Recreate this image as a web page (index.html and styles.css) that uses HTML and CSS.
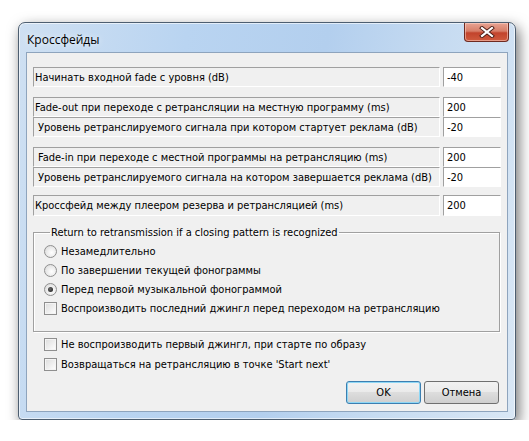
FILE: index.html
```html
<!DOCTYPE html>
<html lang="ru">
<head>
<meta charset="utf-8">
<title>Кроссфейды</title>
<link rel="stylesheet" href="styles.css">
</head>
<body>
    <div class="window">
        <div class="titleBar">
            <span class="title">Кроссфейды</span>
            <span class="closeButton">
                <svg width="16" height="12" viewBox="0 0 16 12">
                    <path d="M3 2 L13 10 M13 2 L3 10" stroke="#4a1c14" stroke-width="4" stroke-linecap="square"/>
                    <path d="M3 2 L13 10 M13 2 L3 10" stroke="#ffffff" stroke-width="2.2" stroke-linecap="square"/>
                </svg>
            </span>
        </div>
        <div class="client">
            <div class="row first">
                <span class="label">Начинать входной fade с уровня (dB)</span>
                <span class="value">-40</span>
            </div>
            <div class="row spaced">
                <span class="label">Fade-out при переходе с ретрансляции на местную программу (ms)</span>
                <span class="value">200</span>
            </div>
            <div class="row">
                <span class="label indent">Уровень ретранслируемого сигнала при котором стартует реклама (dB)</span>
                <span class="value">-20</span>
            </div>
            <div class="row spaced">
                <span class="label indent">Fade-in при переходе с местной программы на ретрансляцию (ms)</span>
                <span class="value">200</span>
            </div>
            <div class="row">
                <span class="label indent">Уровень ретранслируемого сигнала на котором завершается реклама (dB)</span>
                <span class="value">-20</span>
            </div>
            <div class="row last">
                <span class="label">Кроссфейд между плеером резерва и ретрансляцией (ms)</span>
                <span class="value">200</span>
            </div>

            <fieldset class="group">
                <legend>Return to retransmission if a closing pattern is recognized</legend>
                <div class="option"><span class="radio"></span>Незамедлительно</div>
                <div class="option"><span class="radio"></span>По завершении текущей фонограммы</div>
                <div class="option"><span class="radio checked"></span>Перед первой музыкальной фонограммой</div>
                <div class="option"><span class="check"></span>Воспроизводить последний джингл перед переходом на ретрансляцию</div>
            </fieldset>

            <div class="options">
                <div class="option"><span class="check"></span>Не воспроизводить первый джингл, при старте по образу</div>
                <div class="option"><span class="check"></span>Возвращаться на ретрансляцию в точке 'Start next'</div>
            </div>

            <div class="buttons">
                <span class="button default">OK</span>
                <span class="button">Отмена</span>
            </div>
        </div>
    </div>
</body>
</html>
```

FILE: styles.css
```css
body {
	margin: 0;
	background-color: #ffffff;
	font-family: "DejaVu Sans Condensed", "DejaVu Sans", Tahoma, sans-serif;
	font-size: 11px;
	color: #000000;
}

.window {
	box-sizing: border-box;
	width: 498px;
	height: 398px;
	margin: 22px 0 0 18px;
	border: 1px solid #4d5e70;
	border-radius: 7px 7px 4px 4px;
	background: linear-gradient(100deg, #cfe0f2 0%, #b9d4f1 30%, #b3cfee 55%, #c6dbf1 75%, #d9e7f5 100%);
	box-shadow: 3px 5px 14px rgba(0, 0, 0, 0.55), inset 0 0 0 1px rgba(255, 255, 255, 0.6);
	padding: 0 7px 7px 7px;
	display: flex;
	flex-direction: column;
}

.titleBar {
	height: 29px;
	display: flex;
	align-items: flex-start;
	justify-content: space-between;
}

.title {
	font-family: "Open Sans", "Noto Sans", sans-serif;
	font-size: 12px;
	margin: 8px 0 0 1px;
	text-shadow: 0 0 6px rgba(255, 255, 255, 0.9);
}

.closeButton {
	box-sizing: border-box;
	width: 45px;
	height: 19px;
	margin-right: -1px;
	border: 1px solid #6e2a20;
	border-top: none;
	border-radius: 0 0 4px 4px;
	background: linear-gradient(#e8a493 0%, #d77e68 45%, #c2432c 55%, #cf5b3e 100%);
	box-shadow: inset 0 0 0 1px rgba(255, 220, 210, 0.5);
	display: flex;
	align-items: center;
	justify-content: center;
}

.client {
	flex: 1;
	background-color: #f0f0f0;
	border: 1px solid #8ea4bd;
	padding: 0 6px 0 6px;
	display: flex;
	flex-direction: column;
}

.row {
	display: flex;
	height: 20px;
	gap: 3px;
}
.row.first {
	margin-top: 14px;
}
.row.spaced {
	margin-top: 10px;
}
.row.last {
	margin-top: 8px;
	height: 21px;
}

.label, .value {
	box-sizing: border-box;
	border-top: 1px solid #a0a0a0;
	border-left: 1px solid #a0a0a0;
	border-bottom: 1px solid #ffffff;
	border-right: 1px solid #ffffff;
	display: flex;
	align-items: center;
	white-space: nowrap;
	overflow: hidden;
}
.label {
	flex: 1;
	padding-left: 1px;
}
.label.indent {
	padding-left: 4px;
}
.value {
	width: 58px;
	background-color: #ffffff;
	padding-left: 3px;
}

.group {
	margin: 10px 1px 0 0;
	padding: 3px 0 13px 10px;
	border: 1px solid #a0a0a0;
	box-shadow: inset 1px 1px 0 #ffffff, 1px 1px 0 #ffffff;
}
.group legend {
	padding: 0 1px;
	margin-left: 6px;
}

.option {
	display: flex;
	align-items: center;
	height: 18px;
	gap: 4px;
	white-space: nowrap;
}
.group .option:nth-child(3) {
	height: 19px;
	margin-top: 1px;
}
.group .option:last-child {
	height: 20px;
}

.radio {
	box-sizing: border-box;
	width: 13px;
	height: 13px;
	border-radius: 50%;
	border: 1px solid #8f8f8f;
	background: radial-gradient(circle at 60% 60%, #ffffff 0%, #ebebeb 50%, #d4d4d4 100%);
	display: flex;
	align-items: center;
	justify-content: center;
}
.radio.checked::after {
	content: "";
	width: 5px;
	height: 5px;
	border-radius: 50%;
	background: radial-gradient(circle at 40% 40%, #6b6b6b, #141414);
}

.check {
	box-sizing: border-box;
	width: 13px;
	height: 13px;
	border: 1px solid #8f8f8f;
	background: linear-gradient(135deg, #dcdcdc, #ffffff);
	box-shadow: inset 0 0 0 1px #f4f4f4;
}

.options {
	margin: 2px 0 0 11px;
}
.options .option {
	height: 20px;
}

.buttons {
	margin-top: 7px;
	display: flex;
	justify-content: flex-end;
	gap: 3px;
	padding-right: 2px;
}

.button {
	box-sizing: border-box;
	width: 75px;
	height: 23px;
	border: 1px solid #707070;
	border-radius: 3px;
	background: linear-gradient(#f2f2f2 0%, #ebebeb 45%, #dddddd 50%, #cfcfcf 100%);
	display: flex;
	align-items: center;
	justify-content: center;
}
.button.default {
	border-color: #3c7fb1;
	box-shadow: inset 0 0 0 1px #8ed7f5;
}
```
